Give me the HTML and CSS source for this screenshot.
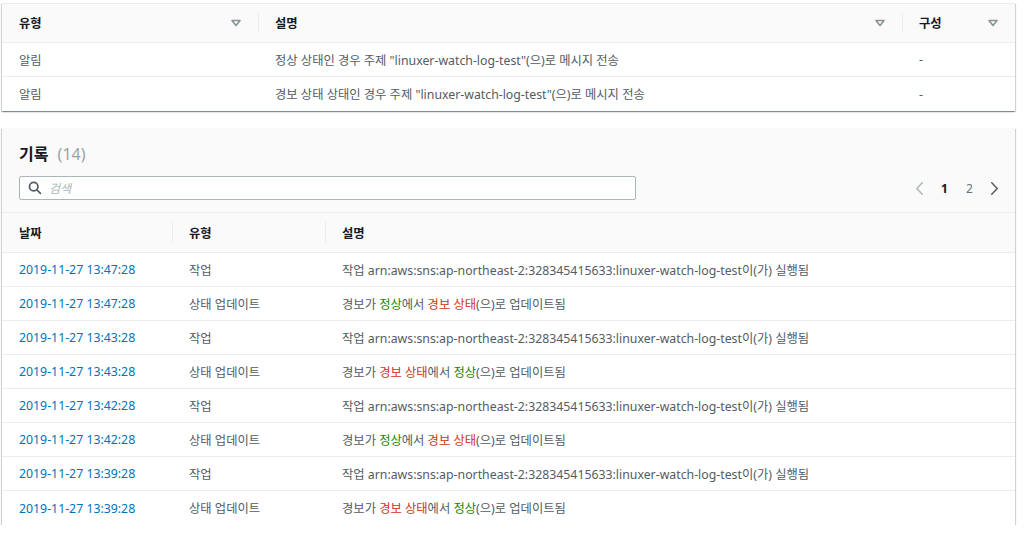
FILE: index.html
```html
<!DOCTYPE html>
<html lang="ko">
<head>
<meta charset="utf-8">
<link rel="stylesheet" href="styles.css">
</head>
<body>
<div class="page">
  <section class="card actions">
    <div class="row head">
      <div class="cell"><span>유형</span><svg class="sort" viewBox="0 0 10 8"><path d="M1 1.5h8L5 6.5z"/></svg></div>
      <div class="cell div"><span>설명</span><svg class="sort" viewBox="0 0 10 8"><path d="M1 1.5h8L5 6.5z"/></svg></div>
      <div class="cell div"><span>구성</span><svg class="sort" viewBox="0 0 10 8"><path d="M1 1.5h8L5 6.5z"/></svg></div>
    </div>
    <div class="row">
      <div class="cell"><span>알림</span></div>
      <div class="cell"><span>정상 상태인 경우 주제 "linuxer-watch-log-test"(으)로 메시지 전송</span></div>
      <div class="cell"><span>-</span></div>
    </div>
    <div class="row">
      <div class="cell"><span>알림</span></div>
      <div class="cell"><span>경보 상태 상태인 경우 주제 "linuxer-watch-log-test"(으)로 메시지 전송</span></div>
      <div class="cell"><span>-</span></div>
    </div>
  </section>

  <section class="card history">
    <div class="hist-top">
      <h2 class="title">기록 <span class="count">(14)</span></h2>
      <div class="tools">
        <label class="search">
          <svg class="mag" viewBox="0 0 16 16"><circle cx="6.5" cy="6.5" r="4.8"/><path d="M10 10l4.2 4.2"/></svg>
          <span class="ph">검색</span>
        </label>
        <nav class="pager">
          <span class="pi"><svg class="chev off" viewBox="0 0 10 16"><path d="M8 1.5L2 8l6 6.5"/></svg></span>
          <span class="pi pg cur">1</span>
          <span class="pi pg">2</span>
          <span class="pi"><svg class="chev" viewBox="0 0 10 16"><path d="M2 1.5L8 8l-6 6.5"/></svg></span>
        </nav>
      </div>
    </div>
    <div class="hrow head">
      <div class="cell"><span>날짜</span></div>
      <div class="cell div"><span>유형</span></div>
      <div class="cell div"><span>설명</span></div>
    </div>
    <div class="hrow"><div class="cell date"><span>2019-11-27 13:47:28</span></div><div class="cell"><span>작업</span></div><div class="cell"><span>작업 arn:aws:sns:ap-northeast-2:328345415633:linuxer-watch-log-test이(가) 실행됨</span></div></div>
    <div class="hrow"><div class="cell date"><span>2019-11-27 13:47:28</span></div><div class="cell"><span>상태 업데이트</span></div><div class="cell"><span>경보가 <span class="ok">정상</span>에서 <span class="alarm">경보 상태</span>(으)로 업데이트됨</span></div></div>
    <div class="hrow"><div class="cell date"><span>2019-11-27 13:43:28</span></div><div class="cell"><span>작업</span></div><div class="cell"><span>작업 arn:aws:sns:ap-northeast-2:328345415633:linuxer-watch-log-test이(가) 실행됨</span></div></div>
    <div class="hrow"><div class="cell date"><span>2019-11-27 13:43:28</span></div><div class="cell"><span>상태 업데이트</span></div><div class="cell"><span>경보가 <span class="alarm">경보 상태</span>에서 <span class="ok">정상</span>(으)로 업데이트됨</span></div></div>
    <div class="hrow"><div class="cell date"><span>2019-11-27 13:42:28</span></div><div class="cell"><span>작업</span></div><div class="cell"><span>작업 arn:aws:sns:ap-northeast-2:328345415633:linuxer-watch-log-test이(가) 실행됨</span></div></div>
    <div class="hrow"><div class="cell date"><span>2019-11-27 13:42:28</span></div><div class="cell"><span>상태 업데이트</span></div><div class="cell"><span>경보가 <span class="ok">정상</span>에서 <span class="alarm">경보 상태</span>(으)로 업데이트됨</span></div></div>
    <div class="hrow"><div class="cell date"><span>2019-11-27 13:39:28</span></div><div class="cell"><span>작업</span></div><div class="cell"><span>작업 arn:aws:sns:ap-northeast-2:328345415633:linuxer-watch-log-test이(가) 실행됨</span></div></div>
    <div class="hrow"><div class="cell date"><span>2019-11-27 13:39:28</span></div><div class="cell"><span>상태 업데이트</span></div><div class="cell"><span>경보가 <span class="alarm">경보 상태</span>에서 <span class="ok">정상</span>(으)로 업데이트됨</span></div></div>
  </section>
</div>
</body>
</html>
```

FILE: styles.css
```css
* { box-sizing: border-box; }
html, body { margin: 0; padding: 0; background: #ffffff; }
body {
  font-family: "Noto Sans", "Noto Sans CJK KR", sans-serif;
  font-size: 12.3px;
  color: #545b64;
}
.page {
  width: 1013px;
  margin-left: 2px;
  padding-top: 3px;
  display: flex;
  flex-direction: column;
  gap: 17px;
}
.card {
  background: #ffffff;
  box-shadow: 0 1px 1px 0 rgba(0, 28, 36, 0.3), 1px 1px 1px 0 rgba(0, 28, 36, 0.15), -1px 1px 1px 0 rgba(0, 28, 36, 0.15);
}
.row {
  display: grid;
  grid-template-columns: 256px 644px 1fr;
  height: 34px;
  border-bottom: 1px solid #eaeded;
}
.row:last-child { border-bottom: none; }
.hrow {
  display: grid;
  grid-template-columns: 170px 153px 1fr;
  height: 34px;
  border-bottom: 1px solid #eaeded;
}
.hrow:last-child { border-bottom: none; }
.cell {
  display: flex;
  align-items: center;
  padding-left: 17px;
  padding-right: 12px;
  white-space: nowrap;
  position: relative;
}
.head {
  background: #fafafa;
  height: 40px;
  color: #16191f;
  font-weight: 700;
  border-top: 1px solid #eaeded;
}
.hrow.head { height: 41px; }
.head .cell { justify-content: space-between; }
.hrow.head .cell { justify-content: flex-start; }
.cell.div::before {
  content: "";
  position: absolute;
  left: 0;
  top: 9px;
  bottom: 9px;
  border-left: 1px solid #eaeded;
}
.sort {
  width: 10px;
  height: 8px;
  fill: #fafafa;
  stroke: #879596;
  stroke-width: 1.6;
  stroke-linejoin: round;
  margin-right: 5px;
}
.hist-top {
  background: #fafafa;
  padding: 16px 8px 12px 17px;
  height: 84px;
}
.title {
  margin: 0;
  font-size: 16px;
  font-weight: 700;
  color: #16191f;
  line-height: 20px;
}
.count { font-weight: 400; color: #95a5a6; font-size: 16px; margin-left: 5px; }
.tools {
  margin-top: 12px;
  display: flex;
  align-items: center;
  justify-content: space-between;
}
.search {
  width: 617px;
  height: 24px;
  background: #ffffff;
  border: 1px solid #aab7b8;
  border-radius: 2px;
  display: flex;
  align-items: center;
  padding-left: 8px;
  gap: 7px;
}
.mag {
  width: 14px;
  height: 14px;
  fill: none;
  stroke: #545b64;
  stroke-width: 2;
  stroke-linecap: round;
}
.ph { color: #aab7b8; font-style: italic; font-size: 12px; }
.pager {
  display: flex;
  align-items: center;
}
.pi {
  width: 25px;
  display: flex;
  justify-content: center;
  align-items: center;
}
.chev {
  width: 9px;
  height: 15px;
  fill: none;
  stroke: #545b64;
  stroke-width: 1.6;
  stroke-linecap: round;
  stroke-linejoin: round;
}
.chev.off { stroke: #aab7b8; }
.pg { color: #687078; font-size: 12px; }
.pg.cur { color: #16191f; font-weight: 700; }
.date { color: #0073bb; font-weight: 400; }
.ok { color: #1d8102; }
.alarm { color: #d13212; }
```
